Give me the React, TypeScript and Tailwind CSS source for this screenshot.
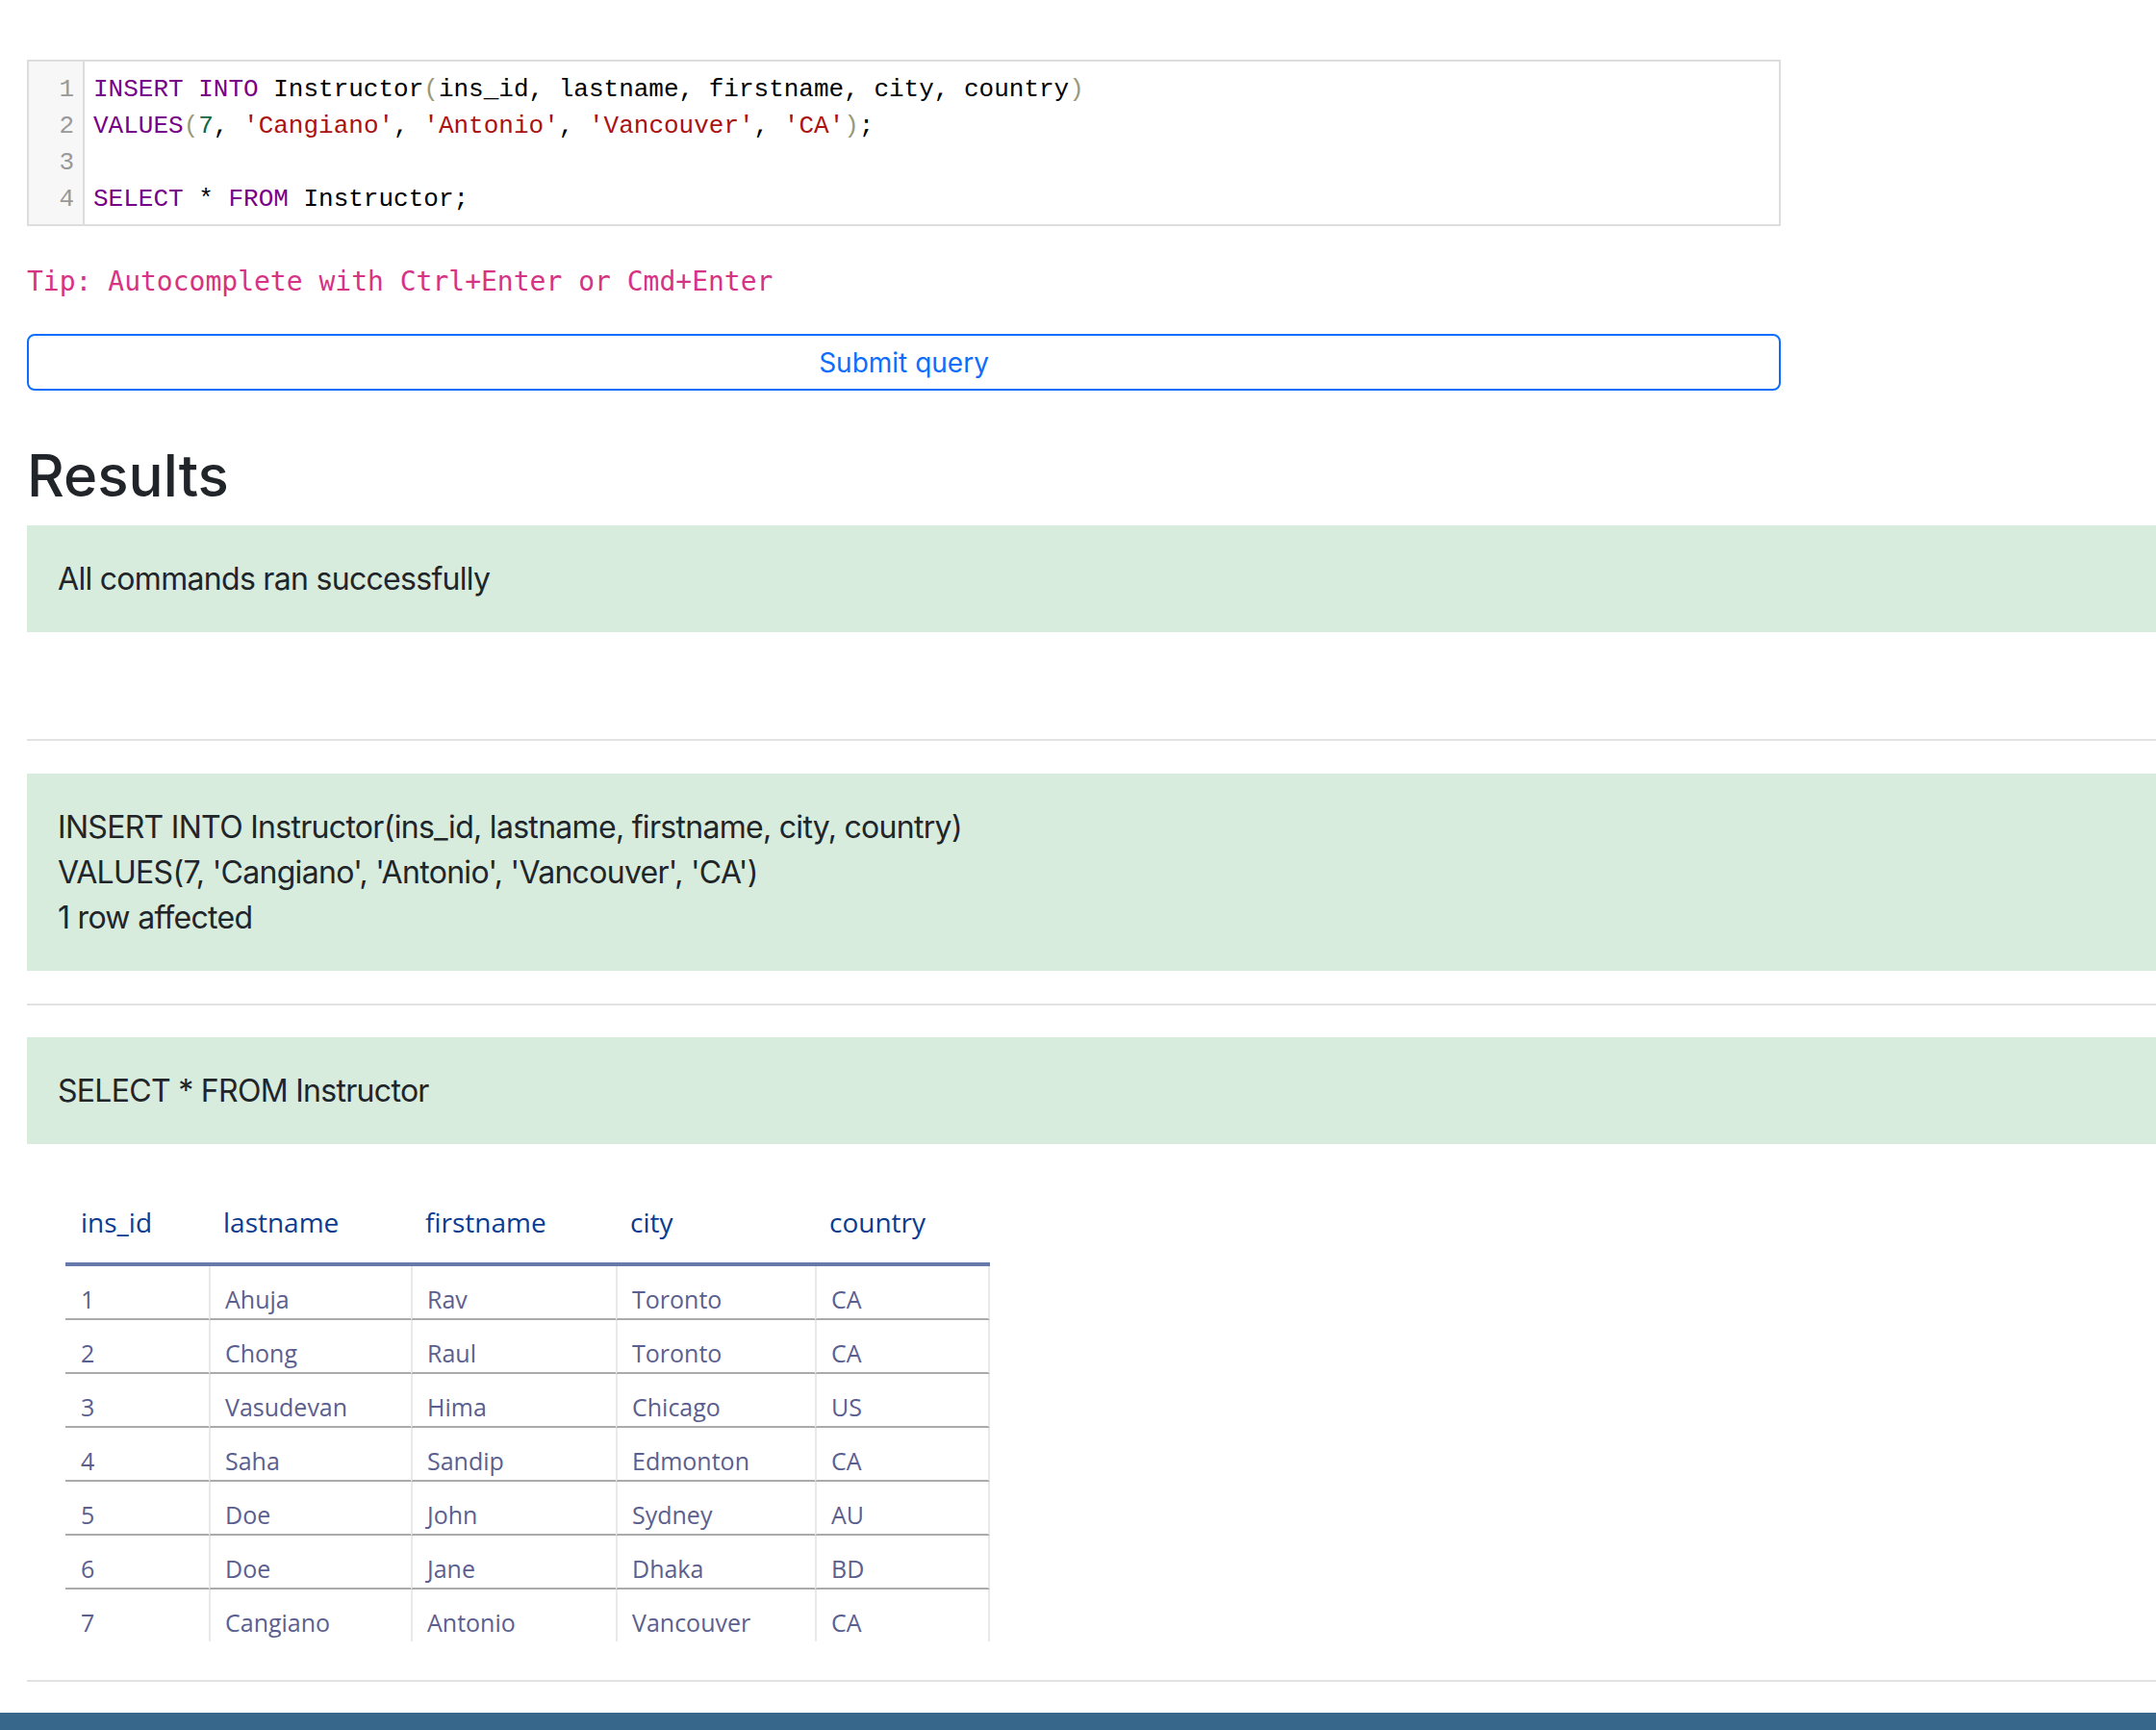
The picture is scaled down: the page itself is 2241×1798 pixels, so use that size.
import React from 'react';

type Tok = { t: string; c?: string };

const KW = 'text-[#770088]';
const STR = 'text-[#aa1111]';
const NUM = 'text-[#116644]';
const BR = 'text-[#999977]';

const codeLines: Tok[][] = [
  [
    { t: 'INSERT', c: KW },
    { t: ' ' },
    { t: 'INTO', c: KW },
    { t: ' Instructor' },
    { t: '(', c: BR },
    { t: 'ins_id, lastname, firstname, city, country' },
    { t: ')', c: BR },
  ],
  [
    { t: 'VALUES', c: KW },
    { t: '(', c: BR },
    { t: '7', c: NUM },
    { t: ', ' },
    { t: "'Cangiano'", c: STR },
    { t: ', ' },
    { t: "'Antonio'", c: STR },
    { t: ', ' },
    { t: "'Vancouver'", c: STR },
    { t: ', ' },
    { t: "'CA'", c: STR },
    { t: ')', c: BR },
    { t: ';' },
  ],
  [],
  [
    { t: 'SELECT', c: KW },
    { t: ' * ' },
    { t: 'FROM', c: KW },
    { t: ' Instructor;' },
  ],
];

const columns = ['ins_id', 'lastname', 'firstname', 'city', 'country'];

const rows = [
  ['1', 'Ahuja', 'Rav', 'Toronto', 'CA'],
  ['2', 'Chong', 'Raul', 'Toronto', 'CA'],
  ['3', 'Vasudevan', 'Hima', 'Chicago', 'US'],
  ['4', 'Saha', 'Sandip', 'Edmonton', 'CA'],
  ['5', 'Doe', 'John', 'Sydney', 'AU'],
  ['6', 'Doe', 'Jane', 'Dhaka', 'BD'],
  ['7', 'Cangiano', 'Antonio', 'Vancouver', 'CA'],
];

const sans = "font-['Inter','Liberation_Sans',sans-serif]";

function Editor() {
  return (
    <div className="mt-[62px] flex border-2 border-[#dddddd] bg-white font-['Liberation_Mono','Courier_New',monospace] text-[26px] text-black">
      <div className="w-[58px] shrink-0 border-r-2 border-[#dddddd] bg-[#f7f7f7] pt-[10px] pb-[7px] pr-[9px] text-right text-[#999999]">
        {codeLines.map((_, i) => (
          <div key={i} className="h-[38px] leading-[38px]">
            {i + 1}
          </div>
        ))}
      </div>
      <div className="flex-1 pt-[10px] pb-[7px] pl-[9px]">
        {codeLines.map((line, i) => (
          <div key={i} className="h-[38px] whitespace-pre leading-[38px]">
            {line.map((tok, j) => (
              <span key={j} className={tok.c}>
                {tok.t}
              </span>
            ))}
          </div>
        ))}
      </div>
    </div>
  );
}

function Alert({ lines }: { lines: string[] }) {
  return (
    <div className={`bg-[#d7ecdd] py-8 pl-[32px] text-[32px] leading-[47px] tracking-[-0.7px] text-[#212529] ${sans}`}>
      {lines.map((l, i) => (
        <div key={i}>{l}</div>
      ))}
    </div>
  );
}

function ResultTable() {
  return (
    <div className="ml-[40px] mt-[41px] w-[961px] font-['Open_Sans','DejaVu_Sans',sans-serif]">
      <div className="grid grid-cols-[149px_210px_213px_207px_182px] border-b-4 border-[#6779ab]">
        {columns.map((c, i) => (
          <div
            key={c}
            className={`pt-[20px] pb-[22px] text-[28px] leading-[40px] text-[#0b3c8f] ${i === 0 ? 'pl-[16px]' : 'pl-[15px]'}`}
          >
            {c}
          </div>
        ))}
      </div>
      {rows.map((r, ri) => (
        <div key={ri} className="grid grid-cols-[149px_210px_213px_207px_182px]">
          {r.map((v, ci) => (
            <div
              key={ci}
              className={`pt-[19px] pb-[5px] text-[25px] leading-[30px] text-[#5b5f8f] ${
                ri < rows.length - 1 ? 'border-b-2 border-b-[#aaaaaa]' : ''
              } ${ci === 0 ? 'pl-[16px]' : 'border-l-2 border-l-[#e9e9e9] pl-[15px]'} ${
                ci === r.length - 1 ? 'border-r-2 border-r-[#e9e9e9]' : ''
              }`}
            >
              {v}
            </div>
          ))}
        </div>
      ))}
    </div>
  );
}

export default function App() {
  return (
    <div className="min-h-screen w-full overflow-hidden bg-white">
      <div className="pl-[28px]">
        <div className="w-[1823px]">
          <Editor />
          <div className="mt-[37px] font-['DejaVu_Sans_Mono','Liberation_Mono',monospace] text-[28px] leading-[42px] text-[#d63384]">
            Tip: Autocomplete with Ctrl+Enter or Cmd+Enter
          </div>
          <button
            type="button"
            className={`mt-[33px] flex h-[59px] w-full items-center justify-center rounded-[8px] border-2 border-[#0d6efd] bg-white text-[28px] text-[#0d6efd] ${sans}`}
          >
            Submit query
          </button>
        </div>

        <h2 className={`mt-[51px] text-[60px] font-medium leading-[74px] text-[#212529] ${sans}`}>Results</h2>

        <div className="mt-[15px]">
          <Alert lines={['All commands ran successfully']} />
        </div>

        <div className="mt-[111px] border-t-2 border-[#e2e2e2]" />

        <div className="mt-[34px]">
          <Alert
            lines={[
              'INSERT INTO Instructor(ins_id, lastname, firstname, city, country)',
              "VALUES(7, 'Cangiano', 'Antonio', 'Vancouver', 'CA')",
              '1 row affected',
            ]}
          />
        </div>

        <div className="mt-[34px] border-t-2 border-[#e2e2e2]" />

        <div className="mt-[33px]">
          <Alert lines={['SELECT * FROM Instructor']} />
        </div>

        <ResultTable />

        <div className="mt-[40px] border-t-2 border-[#e2e2e2]" />
      </div>

      <div className="mt-[32px] h-[60px] bg-[#37688c]" />
    </div>
  );
}
